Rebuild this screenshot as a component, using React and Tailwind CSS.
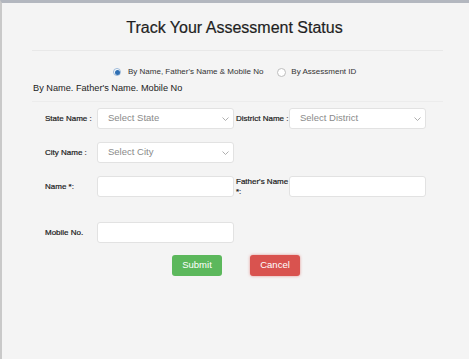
import React from "react";

const Chevron = () => (
  <svg width="7" height="5" viewBox="0 0 7 5" className="absolute right-[4px] top-1/2 -translate-y-1/2">
    <path d="M0.5 1 L3.5 4 L6.5 1" fill="none" stroke="#9a9a9a" strokeWidth="0.8" />
  </svg>
);

const Select = ({ placeholder }) => (
  <div className="relative w-[137px] h-[21px] bg-white border border-[#e2e2e2] rounded-[3px] flex items-center pl-[10px] text-[9.5px] text-[#8a8a8a]">
    {placeholder}
    <Chevron />
  </div>
);

const Input = () => (
  <div className="w-[137px] h-[21px] bg-white border border-[#e2e2e2] rounded-[3px]" />
);

const Label = ({ children, className = "" }) => (
  <div className={`text-[8px] text-[#1a1a1a] leading-[10px] [-webkit-text-stroke:0.2px_#1a1a1a] ${className}`}>{children}</div>
);

export default function App() {
  return (
    <div
      className="w-[469px] h-[359px] bg-[#f4f4f4] border-t-[3px] border-t-[#b3b7bf] border-l-2 border-l-[#c9c9c9] overflow-hidden"
      style={{ fontFamily: '"Liberation Sans", Arial, sans-serif' }}
    >
      <h1 className="text-center text-[16px] text-[#1f1f1f] leading-[20px] mt-[15px] ml-[-2px] [-webkit-text-stroke:0.2px_#1f1f1f]">
        Track Your Assessment Status
      </h1>
      <div className="h-px bg-[#e8e8e8] ml-[30px] mr-[26px] mt-[12px]" />

      <div className="flex items-center text-[8px] text-[#333] mt-[15px] ml-[111px]">
        <span className="w-[8px] h-[8px] rounded-full border border-[#9bb8d8] bg-white flex items-center justify-center">
          <span className="w-[5px] h-[5px] rounded-full bg-[#2f6fb3]" />
        </span>
        <span className="ml-[7px]">By Name, Father's Name &amp; Mobile No</span>
        <span className="ml-[14px] w-[9px] h-[9px] rounded-full border border-[#bdbdbd] bg-white" />
        <span className="ml-[5px]">By Assessment ID</span>
      </div>

      <div className="ml-[31px] mt-[4px] text-[9.2px] text-[#222] leading-[12px]">
        By Name. Father's Name. Mobile No
      </div>
      <div className="h-px bg-[#ececec] ml-[30px] mr-[26px] mt-[7px]" />

      <div className="ml-[43px] mt-[6px] flex flex-col">
        <div className="flex items-center">
          <Label className="w-[52px]">State Name :</Label>
          <Select placeholder="Select State" />
          <Label className="w-[55px] pl-[2px] whitespace-nowrap">District Name :</Label>
          <Select placeholder="Select District" />
        </div>
        <div className="flex items-center mt-[13px]">
          <Label className="w-[52px]">City Name :</Label>
          <Select placeholder="Select City" />
        </div>
        <div className="flex items-center mt-[13px]">
          <Label className="w-[52px]">Name *:</Label>
          <Input />
          <Label className="w-[55px] pl-[2px] self-start mt-[1px]">Father's Name *:</Label>
          <Input />
        </div>
        <div className="flex items-center mt-[25px]">
          <Label className="w-[52px]">Mobile No.</Label>
          <Input />
        </div>
      </div>

      <div className="flex ml-[170px] mt-[12px] gap-[28px]">
        <button className="w-[50px] h-[21px] rounded-[3px] bg-[#5cb85c] text-white text-[9.5px]">Submit</button>
        <button className="w-[50px] h-[21px] rounded-[3px] bg-[#d9534f] text-white text-[9.5px] shadow-[0_0_3px_rgba(217,83,79,0.6)]">Cancel</button>
      </div>
    </div>
  );
}
